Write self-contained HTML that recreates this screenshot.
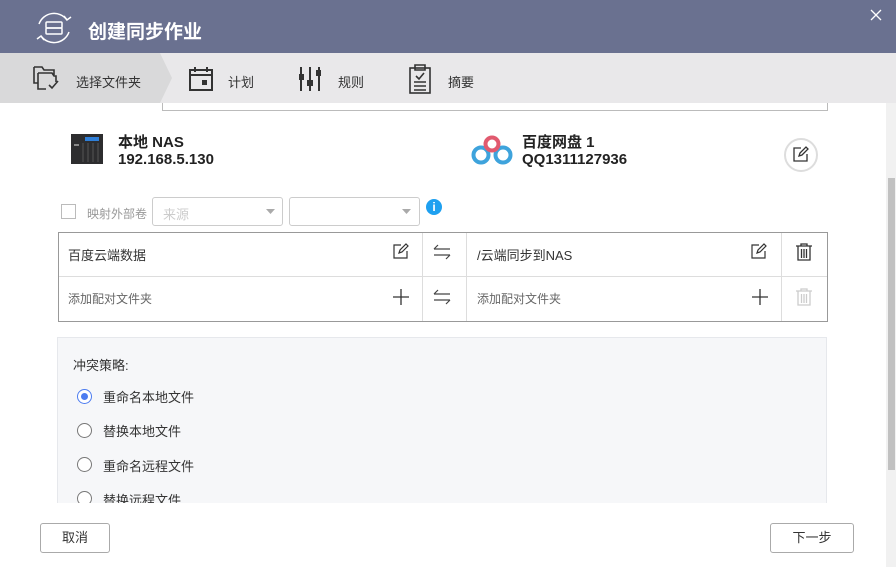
<!DOCTYPE html>
<html><head><meta charset="utf-8"><style>
*{margin:0;padding:0;box-sizing:border-box}
body{width:896px;height:567px;overflow:hidden;background:#fff;font-family:"Liberation Sans","Noto Sans CJK SC",sans-serif;position:relative;color:#333}
.a{position:absolute}
.hdr{left:0;top:0;width:896px;height:53px;background:#6a7190}
.tabs{left:0;top:53px;width:896px;height:50px;background:#e9e8ea}
.t{font-size:13px;color:#333}
.cell{border-left:1px solid #ddd}
.radio{width:15px;height:15px;border:1px solid #777;border-radius:50%;background:#fff}
.btn{border:1px solid #aaa;border-radius:3px;background:#fff;font-size:13px;text-align:center;line-height:28px;color:#333}
</style></head><body>
<div class="a hdr"></div>
<svg class="a" style="left:34px;top:10px" width="40" height="36" viewBox="0 0 40 36" fill="none" stroke="#fff" stroke-width="1.5">
<path d="M5 14 A16 16 0 0 1 33 10"/><path d="M30 6 L33 10 L37 7"/>
<path d="M35 22 A16 16 0 0 1 7 26"/><path d="M10 30 L7 26 L3 29"/>
<rect x="12" y="12" width="16" height="6" rx="1"/><rect x="12" y="18" width="16" height="6" rx="1"/></svg>
<div class="a" style="left:88px;top:17px;font-size:19px;font-weight:bold;color:#fff">创建同步作业</div>
<svg class="a" style="left:870px;top:9px" width="12" height="12" stroke="#fff" stroke-width="1.3"><path d="M1 1L11 11M11 1L1 11"/></svg>
<div class="a tabs"></div>
<svg class="a" style="left:0;top:53px" width="175" height="50"><polygon points="0,0 160,0 172,25 160,50 0,50" fill="#d9d9da"/></svg>
<svg class="a" style="left:32px;top:65px" width="30" height="28" fill="none" stroke="#333" stroke-width="1.6"><path d="M2 2h8l2 3h10v5M2 2v16h4M6 8h14l2 3h2v6M6 8v16h8"/><path d="M17 20l3 3 6-7"/></svg>
<div class="a t" style="left:76px;top:72px">选择文件夹</div>
<svg class="a" style="left:189px;top:66px" width="24" height="26" fill="none" stroke="#333" stroke-width="2"><rect x="1" y="4" width="22" height="20"/><path d="M1 9h22M6 1v5M18 1v5"/><rect x="14" y="15" width="3" height="3" fill="#333"/></svg>
<div class="a t" style="left:228px;top:72px">计划</div>
<svg class="a" style="left:299px;top:67px" width="22" height="24" stroke="#333" stroke-width="2"><path d="M2 0v24M11 0v24M20 0v24"/><rect x="0" y="8" width="4" height="4" fill="#333"/><rect x="9" y="14" width="4" height="4" fill="#333"/><rect x="18" y="4" width="4" height="4" fill="#333"/></svg>
<div class="a t" style="left:338px;top:72px">规则</div>
<svg class="a" style="left:409px;top:64px" width="22" height="30" fill="none" stroke="#333" stroke-width="1.6"><rect x="1" y="4" width="20" height="25"/><path d="M6 1h10v5H6zM5 18h12M5 22h12M5 26h12M7 12l3 3 5-6"/></svg>
<div class="a t" style="left:448px;top:72px">摘要</div>
<div class="a" style="left:162px;top:103px;width:666px;height:8px;border:1px solid #bbb;border-top:none"></div>
<div class="a" style="left:886px;top:103px;width:10px;height:464px;background:#f1f1f1"></div>
<div class="a" style="left:888px;top:178px;width:7px;height:292px;background:#c1c1c1"></div>
<svg class="a" style="left:71px;top:134px" width="32" height="30"><rect x="0" y="0" width="32" height="30" fill="#2d2d2f"/><rect x="14" y="3" width="14" height="4" fill="#2f7fd8"/><path d="M12 9v19M17 9v19M22 9v19M27 9v19" stroke="#555"/><rect x="3" y="10" width="5" height="2" fill="#888"/></svg>
<div class="a" style="left:118px;top:131px;font-size:15px;font-weight:bold;color:#222">本地 NAS</div>
<div class="a" style="left:118px;top:151px;font-size:15px;font-weight:bold;color:#222">192.168.5.130</div>
<svg class="a" style="left:471px;top:134px" width="42" height="32" fill="none" stroke-width="4"><circle cx="10" cy="21" r="7.5" stroke="#3ea3dc"/><circle cx="32" cy="21" r="7.5" stroke="#3ea3dc"/><circle cx="21" cy="10" r="6.5" stroke="#e15a6f"/></svg>
<div class="a" style="left:522px;top:131px;font-size:15px;font-weight:bold;color:#222">百度网盘 1</div>
<div class="a" style="left:522px;top:151px;font-size:15px;font-weight:bold;color:#222">QQ1311127936</div>
<div class="a" style="left:784px;top:138px;width:34px;height:34px;border:2px solid #ddd;border-radius:50%"></div>
<svg class="a" style="left:793px;top:146px" width="16" height="16" fill="none" stroke="#333" stroke-width="1.3"><path d="M8 2H1v13h13V8M6 10l1-3 6-6 2 2-6 6z"/></svg>
<div class="a" style="left:61px;top:204px;width:15px;height:15px;border:1px solid #bbb"></div>
<div class="a" style="left:87px;top:205px;font-size:12px;color:#999">映射外部卷</div>
<div class="a" style="left:152px;top:197px;width:131px;height:29px;border:1px solid #ccc;border-radius:3px"></div>
<div class="a" style="left:163px;top:204px;font-size:13px;color:#ccc">来源</div>
<div class="a" style="left:289px;top:197px;width:131px;height:29px;border:1px solid #ccc;border-radius:3px"></div>
<svg class="a" style="left:266px;top:209px" width="10" height="6"><path d="M0 0h9L4.5 5z" fill="#aaa"/></svg>
<svg class="a" style="left:402px;top:209px" width="10" height="6"><path d="M0 0h9L4.5 5z" fill="#aaa"/></svg>
<div class="a" style="left:426px;top:199px;width:16px;height:16px;border-radius:50%;background:#1ea0f0;color:#fff;font-size:12px;font-weight:bold;text-align:center;line-height:16px">i</div>
<div class="a" style="left:58px;top:232px;width:770px;height:90px;border:1px solid #999"></div>
<div class="a" style="left:59px;top:276px;width:768px;height:1px;background:#ddd"></div>
<div class="a cell" style="left:422px;top:233px;width:1px;height:88px"></div>
<div class="a cell" style="left:466px;top:233px;width:1px;height:88px"></div>
<div class="a cell" style="left:781px;top:233px;width:1px;height:88px"></div>
<div class="a" style="left:68px;top:245px;font-size:13px;color:#333">百度云端数据</div>
<div class="a" style="left:477px;top:245px;font-size:13px;color:#333">/云端同步到NAS</div>
<div class="a" style="left:68px;top:290px;font-size:12px;color:#666">添加配对文件夹</div>
<div class="a" style="left:477px;top:290px;font-size:12px;color:#666">添加配对文件夹</div>
<svg class="a" style="left:393px;top:243px" width="16" height="16" fill="none" stroke="#333" stroke-width="1.2"><path d="M8 2H1v13h13V8M6 10l1-3 6-6 2 2-6 6z"/></svg>
<svg class="a" style="left:751px;top:243px" width="16" height="16" fill="none" stroke="#333" stroke-width="1.2"><path d="M8 2H1v13h13V8M6 10l1-3 6-6 2 2-6 6z"/></svg>
<svg class="a" style="left:433px;top:244px" width="18" height="16" fill="none" stroke="#444" stroke-width="1.2"><path d="M1 5h16M5 1L1 5M1 11h16M13 15l4-4"/></svg>
<svg class="a" style="left:433px;top:289px" width="18" height="16" fill="none" stroke="#444" stroke-width="1.2"><path d="M1 5h16M5 1L1 5M1 11h16M13 15l4-4"/></svg>
<svg class="a" style="left:393px;top:289px" width="16" height="16" stroke="#333" stroke-width="1.3"><path d="M8 0v16M0 8h16"/></svg>
<svg class="a" style="left:752px;top:289px" width="16" height="16" stroke="#333" stroke-width="1.3"><path d="M8 0v16M0 8h16"/></svg>
<svg class="a" style="left:796px;top:243px" width="16" height="18" fill="none" stroke="#333" stroke-width="1.3"><path d="M0 3h16M5 3V1h6v2M2 3v14h12V3M5.5 6v9M8 6v9M10.5 6v9"/></svg>
<svg class="a" style="left:796px;top:288px" width="16" height="18" fill="none" stroke="#ccc" stroke-width="1.3"><path d="M0 3h16M5 3V1h6v2M2 3v14h12V3M5.5 6v9M8 6v9M10.5 6v9"/></svg>
<div class="a" style="left:57px;top:337px;width:770px;height:166px;background:#f6f7f9;border:1px solid #e6e8ec;border-bottom:none"></div>
<div class="a" style="left:73px;top:355px;font-size:13px;color:#333">冲突策略:</div>
<div class="a radio" style="left:77px;top:389px;border-color:#4c7cf0"></div>
<div class="a" style="left:81px;top:393px;width:7px;height:7px;border-radius:50%;background:#4c7cf0"></div>
<div class="a" style="left:103px;top:387px;font-size:13px">重命名本地文件</div>
<div class="a radio" style="left:77px;top:423px"></div>
<div class="a" style="left:103px;top:421px;font-size:13px">替换本地文件</div>
<div class="a radio" style="left:77px;top:457px"></div>
<div class="a" style="left:103px;top:456px;font-size:13px">重命名远程文件</div>
<div class="a" style="left:57px;top:488px;width:770px;height:15px;overflow:hidden"><div class="a radio" style="left:20px;top:3px"></div><div class="a" style="left:46px;top:2px;font-size:13px">替换远程文件</div></div>
<div class="a btn" style="left:40px;top:523px;width:70px;height:30px">取消</div>
<div class="a btn" style="left:770px;top:523px;width:84px;height:30px">下一步</div>
</body></html>
